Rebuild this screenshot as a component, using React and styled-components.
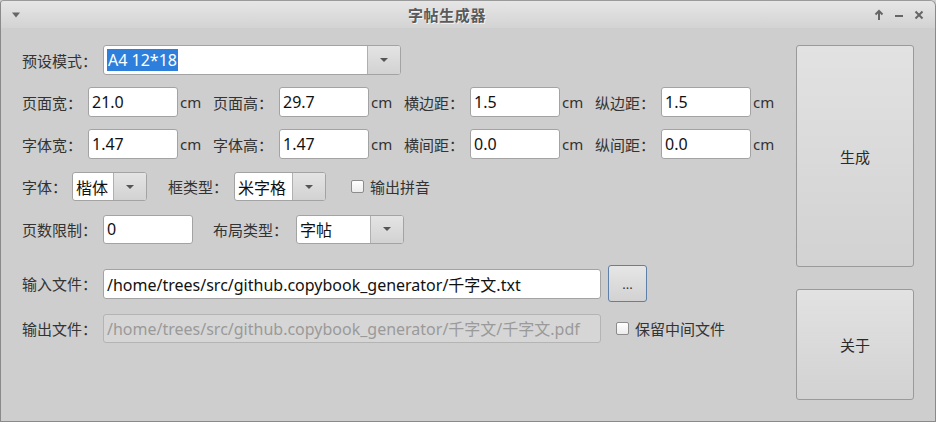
import React from 'react';
import styled, { createGlobalStyle } from 'styled-components';

const GlobalStyle = createGlobalStyle`
  html, body {
    margin: 0;
    padding: 0;
    background: #cecece;
  }
  body {
    font-family: "Noto Sans", "Noto Sans CJK SC", sans-serif;
  }
`;

const Window = styled.div`
  width: 936px;
  height: 422px;
  box-sizing: border-box;
  border: 1px solid #8a8a8a;
  border-top-color: #9a9a9a;
  border-radius: 4px 6px 0 0;
  background: #cecece;
  overflow: hidden;
  display: flex;
  flex-direction: column;
`;

const TitleBar = styled.div`
  height: 27px;
  flex: 0 0 27px;
  background: linear-gradient(#e6e6e6, #d3d3d3);
  display: flex;
  align-items: center;
  padding: 0 10px 0 10px;
`;

const Title = styled.div`
  flex: 1;
  text-align: center;
  font-size: 15px;
  font-weight: bold;
  color: #5a5a5a;
  text-shadow: 1px 1px 0 #f4f4f4;
  letter-spacing: 0.6px;
`;

const TitleControls = styled.div`
  display: flex;
  align-items: center;
  gap: 8px;
`;

const Body = styled.div`
  flex: 1;
  display: flex;
  padding: 17px 21px 0 21px;
`;

const Form = styled.div`
  flex: 1;
  min-width: 0;
  display: flex;
  flex-direction: column;
`;

const Row = styled.div`
  display: flex;
  align-items: center;
  height: ${(p) => p.$h || 30}px;
  margin-top: ${(p) => p.$mt || 0}px;
`;

const Label = styled.span`
  width: ${(p) => p.$w}px;
  flex: 0 0 ${(p) => p.$w}px;
  margin-left: ${(p) => p.$ml || 0}px;
  font-size: 15px;
  color: #333;
  white-space: nowrap;
`;

const Input = styled.div`
  box-sizing: border-box;
  width: ${(p) => p.$w}px;
  flex: 0 0 ${(p) => p.$w}px;
  height: ${(p) => p.$h || 30}px;
  background: ${(p) => (p.$disabled ? '#d6d6d6' : '#fff')};
  border: 1px solid ${(p) => (p.$disabled ? '#b4b4b4' : '#a3a3a3')};
  border-radius: 3px;
  display: flex;
  align-items: center;
  padding-left: 3px;
  font-size: 16px;
  color: ${(p) => (p.$disabled ? '#9a9a9a' : '#111')};
  white-space: nowrap;
  overflow: hidden;
`;

const Selected = styled.span`
  background: #2e7fdc;
  color: #fff;
  padding: 0 1px;
  line-height: 22px;
`;

const Unit = styled.span`
  width: 35px;
  padding-left: 2px;
  box-sizing: border-box;
  font-size: 15px;
  color: #333;
`;

const Grid = styled.div`
  display: grid;
  grid-template-columns: repeat(4, 66px 90px 35px);
  grid-auto-rows: 30px;
  row-gap: 12px;
  align-items: center;
  margin-top: 12px;
`;

const Combo = styled.div`
  box-sizing: border-box;
  width: ${(p) => p.$w}px;
  flex: 0 0 ${(p) => p.$w}px;
  height: ${(p) => p.$h || 29}px;
  display: flex;
  border: 1px solid #a3a3a3;
  border-radius: 3px;
  overflow: hidden;
  background: #fff;
`;

const ComboText = styled.div`
  flex: 1;
  display: flex;
  align-items: center;
  padding-left: 3px;
  font-size: 16px;
  color: #111;
  white-space: nowrap;
`;

const ComboArrow = styled.div`
  width: 32px;
  flex: 0 0 32px;
  border-left: 1px solid #b0b0b0;
  background: linear-gradient(#e4e4e4, #d2d2d2);
  display: flex;
  align-items: center;
  justify-content: center;
`;

const Arrow = styled.span`
  width: 0;
  height: 0;
  border-left: 4px solid transparent;
  border-right: 4px solid transparent;
  border-top: 4px solid #555;
`;

const CheckWrap = styled.label`
  display: flex;
  align-items: center;
  gap: 6px;
  margin-left: ${(p) => p.$ml || 0}px;
  font-size: 15px;
  color: #333;
  white-space: nowrap;
`;

const CheckBox = styled.span`
  box-sizing: border-box;
  width: 13px;
  height: 13px;
  border: 1px solid #8c8c8c;
  border-radius: 2px;
  background: linear-gradient(#ffffff, #ececec);
`;

const SmallButton = styled.div`
  box-sizing: border-box;
  width: 39px;
  height: 37px;
  margin-left: 7px;
  border: 1px solid #5d7fa8;
  border-radius: 3px;
  background: linear-gradient(#e6e6e6, #d2d2d2);
  display: flex;
  align-items: center;
  justify-content: center;
  font-size: 13px;
  color: #333;
`;

const Side = styled.div`
  width: 118px;
  flex: 0 0 118px;
  display: flex;
  flex-direction: column;
  gap: 22px;
  margin-left: 21px;
`;

const BigButton = styled.div`
  box-sizing: border-box;
  height: ${(p) => p.$h}px;
  border: 1px solid #9a9a9a;
  border-radius: 3px;
  background: linear-gradient(#e2e2e2, #d2d2d2);
  display: flex;
  align-items: center;
  justify-content: center;
  font-size: 15px;
  color: #2a2a2a;
`;

const Icon = ({ children }) => (
  <svg width="12" height="12" viewBox="0 0 12 12" fill="none" stroke="#666" strokeWidth="2">
    {children}
  </svg>
);

const margins = [
  ['页面宽：', '21.0', '页面高：', '29.7', '横边距：', '1.5', '纵边距：', '1.5'],
  ['字体宽：', '1.47', '字体高：', '1.47', '横间距：', '0.0', '纵间距：', '0.0'],
];

export default function App() {
  return (
    <>
      <GlobalStyle />
      <Window>
        <TitleBar>
          <svg width="10" height="6" viewBox="0 0 10 6">
            <path d="M1 0.5 L9 0.5 L5 5.5 Z" fill="#666" />
          </svg>
          <Title>字帖生成器</Title>
          <TitleControls>
            <Icon>
              <path d="M6 11 V2 M2.5 5.5 L6 2 L9.5 5.5" />
            </Icon>
            <Icon>
              <path d="M2 7 H10" />
            </Icon>
            <Icon>
              <path d="M2.5 2.5 L9.5 9.5 M9.5 2.5 L2.5 9.5" />
            </Icon>
          </TitleControls>
        </TitleBar>
        <Body>
          <Form>
            <Row>
              <Label $w={81}>预设模式：</Label>
              <Combo $w={298} $h={30}>
                <ComboText>
                  <Selected>A4 12*18</Selected>
                </ComboText>
                <ComboArrow>
                  <Arrow />
                </ComboArrow>
              </Combo>
            </Row>
            <Grid>
              {margins.map((row) =>
                [0, 1, 2, 3].map((i) => (
                  <React.Fragment key={row[i * 2]}>
                    <Label $w={66}>{row[i * 2]}</Label>
                    <Input $w={90}>{row[i * 2 + 1]}</Input>
                    <Unit>cm</Unit>
                  </React.Fragment>
                ))
              )}
            </Grid>
            <Row $mt={13} $h={29}>
              <Label $w={50}>字体：</Label>
              <Combo $w={75}>
                <ComboText>楷体</ComboText>
                <ComboArrow>
                  <Arrow />
                </ComboArrow>
              </Combo>
              <Label $w={66} $ml={21}>框类型：</Label>
              <Combo $w={92}>
                <ComboText>米字格</ComboText>
                <ComboArrow>
                  <Arrow />
                </ComboArrow>
              </Combo>
              <CheckWrap $ml={25}>
                <CheckBox />
                输出拼音
              </CheckWrap>
            </Row>
            <Row $mt={13} $h={30}>
              <Label $w={81}>页数限制：</Label>
              <Input $w={90} $h={29}>0</Input>
              <Label $w={83} $ml={20}>布局类型：</Label>
              <Combo $w={108}>
                <ComboText>字帖</ComboText>
                <ComboArrow>
                  <Arrow />
                </ComboArrow>
              </Combo>
            </Row>
            <Row $mt={21} $h={37}>
              <Label $w={81}>输入文件：</Label>
              <Input $w={498}>/home/trees/src/github.copybook_generator/千字文.txt</Input>
              <SmallButton>...</SmallButton>
            </Row>
            <Row $mt={11} $h={30}>
              <Label $w={81}>输出文件：</Label>
              <Input $w={498} $h={29} $disabled>
                /home/trees/src/github.copybook_generator/千字文/千字文.pdf
              </Input>
              <CheckWrap $ml={15}>
                <CheckBox />
                保留中间文件
              </CheckWrap>
            </Row>
          </Form>
          <Side>
            <BigButton $h={222}>生成</BigButton>
            <BigButton $h={111}>关于</BigButton>
          </Side>
        </Body>
      </Window>
    </>
  );
}
